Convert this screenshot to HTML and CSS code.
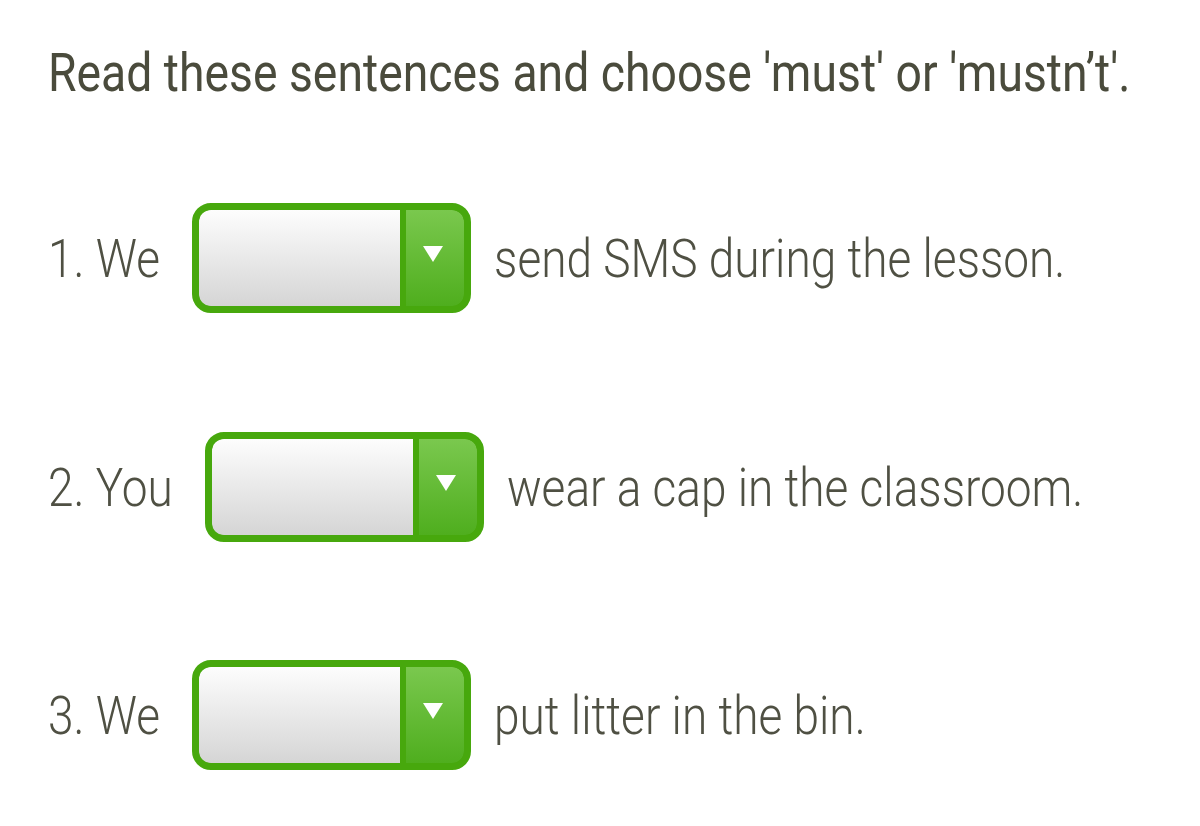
FILE: index.html
```html
<!DOCTYPE html>
<html>
<head>
<meta charset="utf-8">
<link rel="stylesheet" href="styles.css">
</head>
<body>
<main class="page">
  <h1 class="title">Read these sentences and choose 'must' or 'mustn’t'.</h1>
  <div class="rows">
    <div class="row">
      <span class="lead">1. We</span>
      <div class="select"><div class="field"></div><div class="btn"><span class="tri"></span></div></div>
      <span class="tail">send SMS during the lesson.</span>
    </div>
    <div class="row">
      <span class="lead">2. You</span>
      <div class="select"><div class="field"></div><div class="btn"><span class="tri"></span></div></div>
      <span class="tail">wear a cap in the classroom.</span>
    </div>
    <div class="row">
      <span class="lead">3. We</span>
      <div class="select"><div class="field"></div><div class="btn"><span class="tri"></span></div></div>
      <span class="tail">put litter in the bin.</span>
    </div>
  </div>
</main>
</body>
</html>
```
FILE: styles.css
```css
html, body { margin: 0; padding: 0; background: #fff; }
.page { padding: 40px 0 0 48px; font-family: Roboto, "Liberation Sans", sans-serif; }
.title { margin: 0; font-size: 46.3px; font-weight: 400; color: #4a4b3c; line-height: 64px; white-space: nowrap; transform: scaleY(1.17); transform-origin: left center; }
.rows { display: flex; flex-direction: column; gap: 118.5px; margin-top: 99px; }
.row { display: flex; align-items: center; height: 110px; font-size: 46px; font-weight: 300; color: #4f5043; }
.lead, .tail { display: inline-block; transform: scaleY(1.16); white-space: nowrap; }
.lead { margin-right: 32px; }
.tail { margin-left: 23px; }
.select { width: 279px; height: 110px; box-sizing: border-box; border: 7px solid #47a80d; border-radius: 19px; display: flex; overflow: hidden; background: #47a80d; flex: none; }
.field { flex: 1; background: linear-gradient(#fdfdfd, #d5d5d5); border-radius: 10px 0 0 10px; }
.btn { width: 58px; margin-left: 6px; background: linear-gradient(#7ac84e, #4fae1e); border-radius: 0 12px 12px 0; display: flex; align-items: center; justify-content: center; }
.tri { width: 0; height: 0; border-left: 10px solid transparent; border-right: 10px solid transparent; border-top: 16px solid #fff; margin-top: -8px; margin-right: 4px; }
```
